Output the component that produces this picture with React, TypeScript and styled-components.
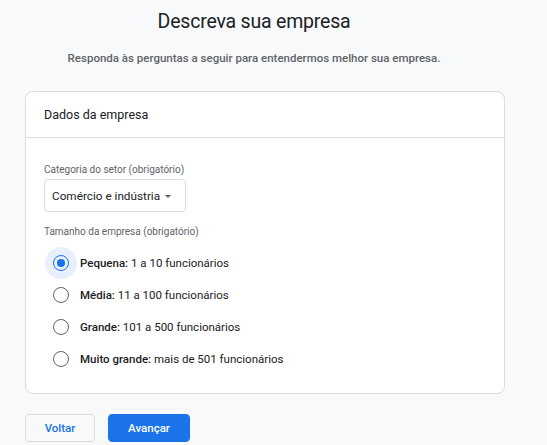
import React, { useState } from "react";
import styled, { createGlobalStyle } from "styled-components";

const GlobalStyle = createGlobalStyle`
  html, body {
    margin: 0;
    padding: 0;
    background: #f8f9fa;
    font-family: Roboto, "Liberation Sans", Arial, sans-serif;
    color: #202124;
  }
`;

const Page = styled.div`
  width: 547px;
  min-height: 445px;
  box-sizing: border-box;
  padding: 8px 0 0 25px;
`;

const Header = styled.div`
  width: 458px;
  text-align: center;
`;

const Title = styled.h1`
  margin: 0;
  font-size: 19.5px;
  line-height: 28px;
  font-weight: 400;
  letter-spacing: -0.2px;
  color: #202124;
`;

const Subtitle = styled.p`
  margin: 14px 0 0;
  font-size: 11.5px;
  line-height: 16px;
  font-weight: 500;
  color: #5f6368;
`;

const Card = styled.div`
  width: 480px;
  box-sizing: border-box;
  margin-top: 25px;
  background: #fff;
  border: 1px solid #dadce0;
  border-radius: 8px;
`;

const CardHeader = styled.div`
  height: 45px;
  display: flex;
  align-items: center;
  padding: 0 18px;
  border-bottom: 1px solid #dadce0;
  font-size: 12.5px;
  color: #202124;
`;

const CardBody = styled.div`
  padding: 24px 18px 18px;
  display: flex;
  flex-direction: column;
  align-items: flex-start;
`;

const FieldLabel = styled.div<{ $gap?: number }>`
  font-size: 10px;
  line-height: 16px;
  color: #5f6368;
  margin-top: ${(p) => p.$gap ?? 0}px;
`;

const Select = styled.button`
  margin-top: 1px;
  width: 142px;
  height: 33px;
  box-sizing: border-box;
  display: flex;
  align-items: center;
  gap: 5px;
  padding: 0 0 0 7px;
  background: #fff;
  border: 1px solid #dadce0;
  border-radius: 4px;
  font-family: inherit;
  font-size: 11.75px;
  color: #202124;
  cursor: pointer;
`;

const Caret = styled.span`
  width: 0;
  height: 0;
  border-left: 3px solid transparent;
  border-right: 3px solid transparent;
  border-top: 3px solid #5f6368;
  margin-top: 1px;
`;

const RadioList = styled.div`
  margin-top: 7px;
  display: flex;
  flex-direction: column;
`;

const RadioRow = styled.label`
  height: 32px;
  display: flex;
  align-items: center;
  font-size: 11.5px;
  color: #202124;
  cursor: pointer;
`;

const RadioHit = styled.span<{ $active: boolean }>`
  width: 32px;
  height: 32px;
  margin-left: 1px;
  margin-right: 3px;
  display: flex;
  align-items: center;
  justify-content: center;
  border-radius: 50%;
  background: ${(p) => (p.$active ? "#e8f0fe" : "transparent")};
`;

const RadioCircle = styled.span<{ $active: boolean }>`
  width: 16px;
  height: 16px;
  box-sizing: border-box;
  border-radius: 50%;
  border: 1.75px solid ${(p) => (p.$active ? "#1a73e8" : "#5f6368")};
  display: flex;
  align-items: center;
  justify-content: center;

  &::after {
    content: "";
    width: 8px;
    height: 8px;
    border-radius: 50%;
    background: ${(p) => (p.$active ? "#1a73e8" : "transparent")};
  }
`;

const Strong = styled.b`
  font-weight: 500;
`;

const Actions = styled.div`
  margin-top: 20px;
  display: flex;
  gap: 13px;
`;

const Button = styled.button<{ $primary?: boolean }>`
  height: 28px;
  box-sizing: border-box;
  padding: 0;
  border-radius: 4px;
  font-family: inherit;
  font-size: 11.5px;
  font-weight: 500;
  cursor: pointer;
  border: 1px solid ${(p) => (p.$primary ? "#1a73e8" : "#dadce0")};
  background: ${(p) => (p.$primary ? "#1a73e8" : "#f8f9fa")};
  color: ${(p) => (p.$primary ? "#fff" : "#1a73e8")};
  width: ${(p) => (p.$primary ? 82 : 70)}px;
`;

const sizes = [
  { name: "Pequena", range: "1 a 10 funcionários" },
  { name: "Média", range: "11 a 100 funcionários" },
  { name: "Grande", range: "101 a 500 funcionários" },
  { name: "Muito grande", range: "mais de 501 funcionários" },
];

export default function App() {
  const [size, setSize] = useState(0);

  return (
    <Page>
      <GlobalStyle />
      <Header>
        <Title>Descreva sua empresa</Title>
        <Subtitle>Responda às perguntas a seguir para entendermos melhor sua empresa.</Subtitle>
      </Header>
      <Card>
        <CardHeader>Dados da empresa</CardHeader>
        <CardBody>
          <FieldLabel>Categoria do setor (obrigatório)</FieldLabel>
          <Select>
            Comércio e indústria
            <Caret />
          </Select>
          <FieldLabel $gap={12}>Tamanho da empresa (obrigatório)</FieldLabel>
          <RadioList>
            {sizes.map((s, i) => (
              <RadioRow key={s.name} onClick={() => setSize(i)}>
                <RadioHit $active={size === i}>
                  <RadioCircle $active={size === i} />
                </RadioHit>
                <span>
                  <Strong>{s.name}:</Strong> {s.range}
                </span>
              </RadioRow>
            ))}
          </RadioList>
        </CardBody>
      </Card>
      <Actions>
        <Button>Voltar</Button>
        <Button $primary>Avançar</Button>
      </Actions>
    </Page>
  );
}
